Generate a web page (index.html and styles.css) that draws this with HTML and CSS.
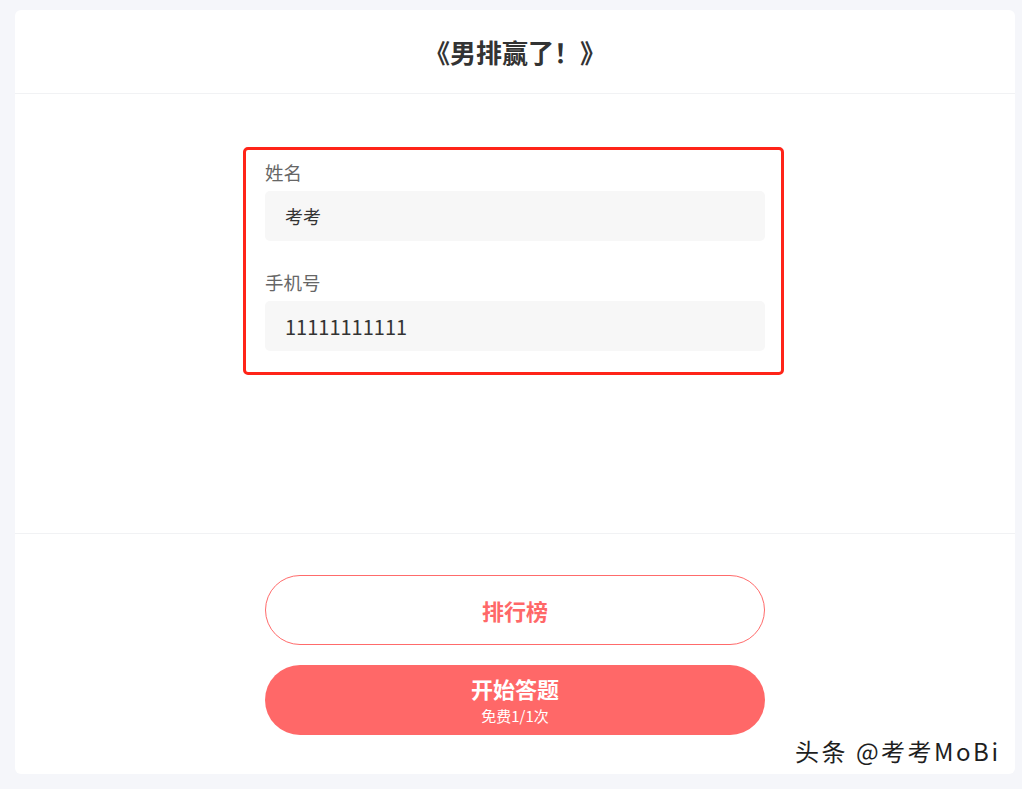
FILE: index.html
```html
<!DOCTYPE html>
<html lang="zh-CN">
<head>
<meta charset="utf-8">
<title>男排赢了</title>
<link rel="stylesheet" href="styles.css">
</head>
<body>
<div class="card">
  <header class="head">《男排赢了！》</header>
  <section class="main">
    <div class="form">
      <div class="label">姓名</div>
      <div class="input">考考</div>
      <div class="label second">手机号</div>
      <div class="input num">11111111111</div>
    </div>
  </section>
  <section class="actions">
    <div class="btn outline">排行榜</div>
    <div class="btn solid">
      <span class="btn-title">开始答题</span>
      <span class="btn-sub">免费1/1次</span>
    </div>
  </section>
</div>
<div class="watermark">头条 @考考MoBi</div>
</body>
</html>
```
FILE: styles.css
```css
html, body {
  margin: 0;
  padding: 0;
}
body {
  background: #f5f6fa;
  font-family: "Noto Sans CJK SC", "Noto Sans", sans-serif;
  width: 1022px;
  height: 789px;
  position: relative;
  overflow: hidden;
}
.card {
  position: relative;
  margin: 10px 0 0 15px;
  width: 1000px;
  height: 764px;
  background: #fff;
  border-radius: 6px;
  display: flex;
  flex-direction: column;
}
.head {
  height: 83px;
  border-bottom: 1px solid #f1f2f4;
  display: flex;
  align-items: center;
  justify-content: center;
  font-size: 26px;
  font-weight: 700;
  color: #333;
}
.main {
  height: 440px;
  display: flex;
  justify-content: center;
  align-items: flex-start;
  padding-top: 53px;
  box-sizing: border-box;
  border-bottom: 1px solid #f1f2f4;
}
.form {
  width: 541px;
  box-sizing: border-box;
  border: 3px solid #ff2418;
  border-radius: 5px;
  padding: 10px 16px 21px 19px;
  margin-left: -3px;
}
.label {
  font-size: 18.5px;
  line-height: 24px;
  color: #666;
  margin-bottom: 7px;
}
.label.second {
  margin-top: 29px;
}
.input {
  height: 50px;
  background: #f7f7f7;
  border-radius: 5px;
  padding-left: 20px;
  display: flex;
  align-items: center;
  font-size: 18px;
  color: #333;
}
.input.num {
  font-size: 20px;
}
.actions {
  flex: 1;
  display: flex;
  flex-direction: column;
  align-items: center;
  padding-top: 41px;
  gap: 20px;
}
.btn {
  width: 500px;
  height: 70px;
  box-sizing: border-box;
  border-radius: 35px;
  display: flex;
  flex-direction: column;
  align-items: center;
  justify-content: center;
}
.btn.outline {
  border: 1px solid #ff6b6b;
  color: #ff6868;
  font-size: 22px;
  font-weight: 700;
}
.btn.solid {
  background: #ff6868;
  color: #fff;
  gap: 8px;
}
.btn-title {
  font-size: 22px;
  font-weight: 700;
  line-height: 24px;
}
.btn-sub {
  font-size: 15px;
  line-height: 16px;
}
.watermark {
  position: absolute;
  left: 795px;
  top: 735px;
  font-size: 24px;
  line-height: 32px;
  letter-spacing: 2.5px;
  color: #1e1e1e;
  text-shadow: 0 0 2px #fff, 0 0 2px #fff;
  white-space: nowrap;
}
```
